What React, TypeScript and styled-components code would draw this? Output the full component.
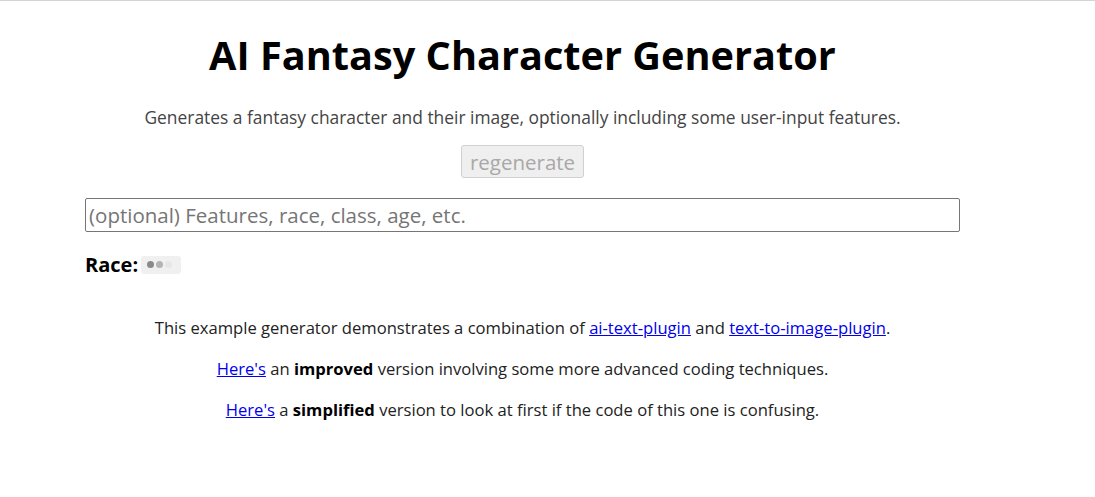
import styled, { createGlobalStyle } from "styled-components";

const GlobalStyle = createGlobalStyle`
  html, body {
    margin: 0;
    padding: 0;
    background: #fff;
  }
  body {
    font-family: "Open Sans", "Noto Sans", sans-serif;
    color: #222;
    border-top: 1px solid #d4d4d4;
  }
`

const Page = styled.main`
  width: 875px;
  margin-left: 85px;
  display: flex;
  flex-direction: column;
  align-items: center;
`

const Title = styled.h1`
  margin: 27px 0 0;
  font-size: 39.7px;
  font-weight: 700;
  line-height: 54px;
  color: #000;
`

const Subtitle = styled.p`
  margin: 23px 0 0;
  font-size: 17.4px;
  line-height: 24px;
  color: #444;
`

const RegenButton = styled.button`
  margin-top: 16px;
  height: 33px;
  padding: 0 8px;
  font-family: inherit;
  font-size: 20.5px;
  color: #a8a8a8;
  background: #efefef;
  border: 1px solid #d0d0d0;
  border-radius: 3px;
`

const FeatureInput = styled.input`
  align-self: stretch;
  margin-top: 20px;
  height: 34px;
  box-sizing: border-box;
  padding: 0 3px;
  font-family: inherit;
  font-size: 20.5px;
  border: 1px solid #767676;
  border-radius: 2px;
  outline: none;

  &::placeholder {
    color: #757575;
  }
`

const RaceRow = styled.div`
  align-self: stretch;
  margin-top: 19px;
  display: flex;
  align-items: center;
  gap: 3px;
  font-size: 20px;
  font-weight: 700;
  color: #000;
`

const Loader = styled.span`
  display: inline-flex;
  align-items: center;
  gap: 2px;
  width: 40px;
  height: 18px;
  box-sizing: border-box;
  padding-left: 6px;
  background: #f0f0f0;
  border-radius: 3px;
`

const Dot = styled.span<{ $shade: string }>`
  width: 7px;
  height: 7px;
  border-radius: 50%;
  background: ${(p) => p.$shade};
`

const Notes = styled.section`
  margin-top: 38px;
  display: flex;
  flex-direction: column;
  align-items: center;
  gap: 17px;
`

const Note = styled.p`
  margin: 0;
  font-size: 16.6px;
  line-height: 24px;
  color: #222;

  a {
    color: #0000ee;
  }

  b {
    color: #000;
  }
`

export default function App() {
  return (
    <>
      <GlobalStyle />
      <Page>
        <Title>AI Fantasy Character Generator</Title>
        <Subtitle>
          Generates a fantasy character and their image, optionally including some user-input features.
        </Subtitle>
        <RegenButton disabled>regenerate</RegenButton>
        <FeatureInput placeholder="(optional) Features, race, class, age, etc." />
        <RaceRow>
          Race:
          <Loader>
            <Dot $shade="#8a8a8a" />
            <Dot $shade="#b4b4b4" />
            <Dot $shade="#e6e6e6" />
          </Loader>
        </RaceRow>
        <Notes>
          <Note>
            This example generator demonstrates a combination of <a href="#">ai-text-plugin</a> and{" "}
            <a href="#">text-to-image-plugin</a>.
          </Note>
          <Note>
            <a href="#">Here's</a> an <b>improved</b> version involving some more advanced coding techniques.
          </Note>
          <Note>
            <a href="#">Here's</a> a <b>simplified</b> version to look at first if the code of this one is confusing.
          </Note>
        </Notes>
      </Page>
    </>
  );
}
